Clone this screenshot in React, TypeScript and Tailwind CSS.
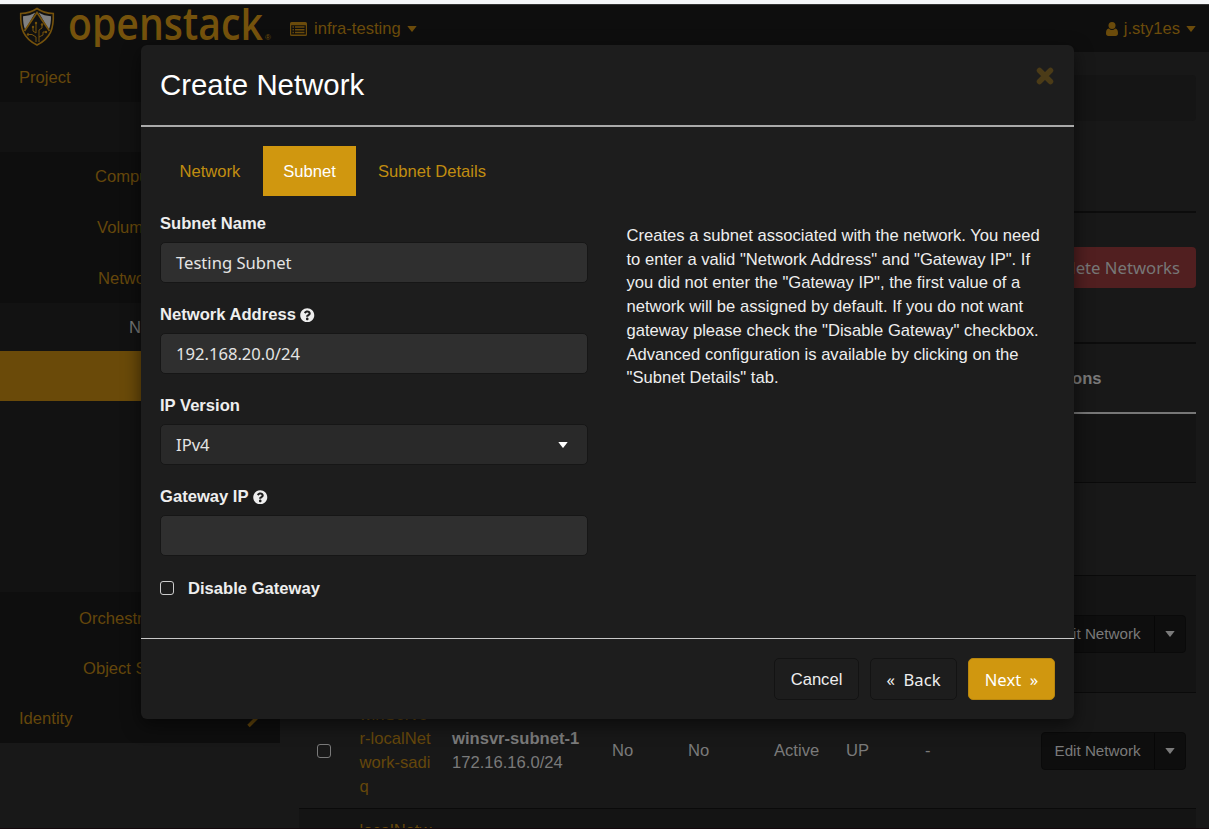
import { FaQuestionCircle } from "react-icons/fa";
import type { ReactNode } from "react";

function Caret({ className = "" }: { className?: string }) {
  return (
    <svg viewBox="0 0 10 6" className={`h-[6px] w-[10px] shrink-0 ${className}`} fill="currentColor">
      <path d="M0.3 0h9.4L5.5 5.5q-.5.5-1 0z" />
    </svg>
  );
}

function Shield() {
  return (
    <svg viewBox="0 0 36 40" className="h-[40px] w-[36px] shrink-0" fill="none">
      <path d="M18 1.500C13 5 8 6.300 1.700 6.500 1.200 21 4 31 18 38 32 31 34.800 21 34.300 6.500 28 6.300 23 5 18 1.500z" fill="#111" stroke="#75520c" strokeWidth="1.600" />
      <path d="M16.300 5.500C12.500 7.800 8.500 9 4 9.200c0 5 .5 9.500 2.200 13.600z" fill="#808080" />
      <path d="M19.700 5.500c3.800 2.300 7.800 3.500 12.300 3.700 0 5-.5 9.500-2.200 13.600z" fill="#808080" />
      <path d="M18 5.500L6 24c2.500 5.500 6.500 9.500 12 12 5.500-2.500 9.500-6.500 12-12z" fill="#111" />
      <path d="M5.500 24L18 5.500 30.500 24" stroke="#75520c" strokeWidth="1.800" />
      <path d="M17 17v9l-3-2v-4M20 35V23l3-2v-4M17 35v-5l-4-2.500H9M20 30l4-2v-3h3" stroke="#75520c" strokeWidth="1" />
      <g fill="#75520c">
        <circle cx="17" cy="16" r="1.200" />
        <circle cx="14" cy="20" r="1.200" />
        <circle cx="23" cy="17.500" r="1.200" />
        <circle cx="9" cy="27.500" r="1.200" />
        <circle cx="27" cy="25" r="1.200" />
      </g>
    </svg>
  );
}

function Header() {
  return (
    <header className="flex h-[48px] shrink-0 items-start border-t border-[#333] bg-[#0e0e0e] pl-[19px] pr-[13px] text-[#6b4b0b]">
      <div className="pt-[2px]">
        <Shield />
      </div>
      <svg viewBox="0 0 206 39" className="ml-[13px] mt-[3px] h-[39px] w-[206px] shrink-0 overflow-hidden" fill="#75520c">
        <text x="0" y="32" fontFamily="'Open Sans', sans-serif" fontWeight="600" fontSize="46" textLength="195" lengthAdjust="spacingAndGlyphs">openstack</text>
        <text x="197" y="32" fontFamily="'Liberation Sans', sans-serif" fontSize="8">®</text>
      </svg>
      <div className="ml-[16px] flex h-[47px] items-center">
        <svg viewBox="0 0 17 14" className="h-[14px] w-[17px]" fill="currentColor">
          <path fillRule="evenodd" d="M1.500 0h14A1.500 1.500 0 0 1 17 1.500v11a1.500 1.500 0 0 1-1.500 1.500h-14A1.500 1.500 0 0 1 0 12.500v-11A1.500 1.500 0 0 1 1.500 0zM1.200 3.200v9.300h14.600V3.200z" />
          <path d="M2.500 4.300h1.400v1.500H2.500zM2.500 7h1.400v1.500H2.500zM2.500 9.700h1.400v1.500H2.500zM5 4.300h9.500v1.500H5zM5 7h9.500v1.500H5zM5 9.700h9.500v1.500H5z" />
        </svg>
        <span className="ml-[7px] pt-px">infra-testing</span>
        <Caret className="ml-[6px]" />
      </div>
      <div className="ml-auto flex h-[47px] items-center">
        <svg viewBox="0 0 12 14" className="h-[14px] w-[12px]" fill="currentColor">
          <circle cx="6" cy="3.600" r="3.500" />
          <path d="M2.700 6.500Q6 9.500 9.300 6.500C11.300 6.700 12 8.800 12 11.300c0 1.700-.9 2.700-2.400 2.700H2.400C.9 14 0 13 0 11.300 0 8.800.7 6.700 2.700 6.500z" />
        </svg>
        <span className="ml-[6px] pt-px">j.sty1es</span>
        <Caret className="ml-[6px]" />
      </div>
    </header>
  );
}

function Sidebar() {
  return (
    <nav className="flex w-[280px] shrink-0 flex-col self-start bg-[#121212] text-[#65470b]">
      <div className="flex h-[50px] items-center bg-[#0e0e0e] pl-[19px] pt-[3px]">Project</div>
      <div className="h-[50px]" />
      <div className="flex h-[151px] flex-col bg-[#0e0e0e]">
        <div className="flex flex-1 items-center pl-[95px] pt-[2px]">Compute</div>
        <div className="flex flex-1 items-center pl-[97px] pt-[3px]">Volumes</div>
        <div className="flex flex-1 items-center pl-[98px] pt-[3px]">Network</div>
      </div>
      <div className="flex h-[48px] items-center pl-[129px] pt-[3px] text-[#777]">Network</div>
      <div className="h-[50px] bg-[#6a4a09]" />
      <div className="h-[191px]" />
      <div className="flex h-[151px] flex-col bg-[#0e0e0e]">
        <div className="flex flex-1 items-center pl-[79px] pt-[4px]">Orchestration</div>
        <div className="flex flex-1 items-center pl-[83px] pt-[4px]">Object Store</div>
        <div className="flex flex-1 items-center justify-between pl-[19px] pr-[22px] pt-[4px]">
          Identity
          <svg viewBox="0 0 11 16" className="h-[16px] w-[11px]" fill="none" stroke="currentColor" strokeWidth="3.500">
            <path d="M2 0l7 6.500L1.500 14" />
          </svg>
        </div>
      </div>
    </nav>
  );
}

function Checkbox({ className }: { className: string }) {
  return <span className={`h-[14px] w-[14px] shrink-0 rounded-[3px] border-[1.500px] ${className}`} />;
}

function EditNetwork() {
  return (
    <div className="ml-auto flex h-[38px] w-[145px] shrink-0 rounded-[4px] border border-[#0a0a0a] bg-[#0e0e0e] text-[15.200px] text-[#7a7a7a]">
      <span className="flex flex-1 items-center whitespace-nowrap pl-[12.500px] pt-px">Edit Network</span>
      <span className="flex w-[31px] items-center justify-center border-l border-[#070707]">
        <Caret className="h-[5px] w-[9px]" />
      </span>
    </div>
  );
}

function Main() {
  return (
    <main className="flex flex-1 flex-col pl-[19px] pr-[13px] text-[#7a7a7a]">
      <div className="mt-[23px] h-[46px] shrink-0 rounded-[4px] bg-[#151515]" />
      <div className="h-[92px] shrink-0 border-b-2 border-[#0c0c0c]" />
      <div className="flex h-[131px] shrink-0 items-start justify-end border-b-2 border-[#0c0c0c] pt-[34px]">
        <div className="flex h-[41px] items-center rounded-[4px] bg-[#511f20] pl-[15px] pr-[16px] pt-px font-['Noto_Sans',sans-serif] text-[16.700px] text-[#777]">Delete Networks</div>
      </div>
      <div className="flex h-[70px] shrink-0 items-center justify-end border-b-2 border-[#777] pr-[94.500px] pt-[2px] font-bold">Actions</div>
      <div className="h-[69px] shrink-0 border-b border-[#0a0a0a] bg-[#141414]" />
      <div className="h-[93px] shrink-0 border-b border-[#0a0a0a]" />
      <div className="flex h-[117px] shrink-0 items-center border-b border-[#0a0a0a] bg-[#141414] pr-[10px]">
        <EditNetwork />
      </div>
      <div className="flex h-[116px] shrink-0 items-center border-b border-[#0a0a0a] pr-[10px]">
        <Checkbox className="ml-[18px] border-[#7a7a7a]" />
        <div className="ml-[28.500px] w-[92.500px] pt-px leading-[23.800px] text-[#65470b]">winServe<br />r-localNet<br />work-sadi<br />q</div>
        <div className="w-[160px] leading-[23.800px]"><b>winsvr-subnet-1</b><br />172.16.16.0/24</div>
        <div className="w-[76px] pt-[2px]">No</div>
        <div className="w-[86px] pt-[2px]">No</div>
        <div className="w-[72px] pt-[2px]">Active</div>
        <div className="w-[79px] pt-[2px]">UP</div>
        <div className="pt-[2px]">-</div>
        <EditNetwork />
      </div>
      <div className="flex-1 bg-[#141414] pl-[60.500px] pt-[10px] leading-[23.800px] text-[#65470b]">localNetw</div>
    </main>
  );
}

function Field({ label, help, children }: { label: string; help?: boolean; children: ReactNode }) {
  return (
    <div className="mb-[20px]">
      <div className="flex h-[24px] items-center font-bold">
        {label}
        {help && <FaQuestionCircle className="ml-[4.500px] h-[14.500px] w-[14.500px]" />}
      </div>
      <div className="mt-[6px] h-[41px]">{children}</div>
    </div>
  );
}

const input = "flex h-[41px] items-center rounded-[5px] border border-[#161616] px-[15px] pt-px font-['Noto_Sans',sans-serif] text-[#e4e4e4]";

function Modal() {
  return (
    <section className="absolute left-[141px] top-[45px] flex h-[674px] w-[933px] flex-col rounded-[6px] bg-[#1d1d1d] text-[#eee] shadow-[0_6px_18px_rgba(0,0,0,0.55)]">
      <div className="flex h-[82px] items-start justify-between border-b-2 border-[#aaa] pl-[19px] pr-[20px]">
        <h1 className="mt-[20px] text-[29.400px] leading-[40px] text-white">Create Network</h1>
        <svg viewBox="0 0 18 18" className="mt-[22px] h-[18px] w-[18px]" stroke="#4b3b17" strokeWidth="5.500" strokeLinecap="round">
          <path d="M3.500 3.500l11 11M14.500 3.500l-11 11" />
        </svg>
      </div>
      <div className="flex h-[512px] flex-col border-b-[1.500px] border-[#c8c8c8] px-[19px] pt-[19px]">
        <div className="flex h-[50px] text-[#c18d10]">
          <span className="flex w-[103px] items-center pl-[19.500px] pt-[2px]">Network</span>
          <span className="flex w-[93px] items-center justify-center bg-[#d0970f] pt-[2px] text-white">Subnet</span>
          <span className="flex items-center pl-[22px] pt-[2px]">Subnet Details</span>
        </div>
        <div className="flex">
          <div className="w-[428px] pt-[16px]">
            <Field label="Subnet Name"><div className={`${input} bg-[#2f2f2f]`}>Testing Subnet</div></Field>
            <Field label="Network Address" help><div className={`${input} bg-[#2f2f2f]`}>192.168.20.0/24</div></Field>
            <Field label="IP Version">
              <div className={`${input} justify-between bg-[#292929]`}>IPv4<Caret className="mr-[4px] text-white" /></div>
            </Field>
            <Field label="Gateway IP" help><div className={`${input} bg-[#2f2f2f]`} /></Field>
            <div className="flex h-[24px] items-center font-bold">
              <Checkbox className="mr-[14px] border-[#ccc]" />
              <span className="pt-[2px]">Disable Gateway</span>
            </div>
          </div>
          <p className="ml-[38.500px] whitespace-nowrap pt-[28px] leading-[23.700px]">
            Creates a subnet associated with the network. You need<br />
            to enter a valid "Network Address" and "Gateway IP". If<br />
            you did not enter the "Gateway IP", the first value of a<br />
            network will be assigned by default. If you do not want<br />
            gateway please check the "Disable Gateway" checkbox.<br />
            Advanced configuration is available by clicking on the<br />
            "Subnet Details" tab.
          </p>
        </div>
      </div>
      <div className="flex justify-end pr-[19px] pt-[19px]">
        <button className="h-[42px] w-[85px] rounded-[5px] border border-[#131313] pt-[2px]">Cancel</button>
        <button className="ml-[11px] h-[42px] w-[87px] rounded-[5px] border border-[#131313] pt-[2px] font-['Noto_Sans',sans-serif]">«&nbsp; Back</button>
        <button className="ml-[11px] h-[42px] w-[87px] rounded-[5px] border border-[#b8860e] bg-[#d0970f] pt-[2px] font-['Noto_Sans',sans-serif] text-white">Next&nbsp; »</button>
      </div>
    </section>
  );
}

export default function App() {
  return (
    <div className="relative flex h-[829px] w-[1209px] flex-col overflow-hidden border-b border-[#14090d] bg-[#181818] font-['Liberation_Sans',Arial,sans-serif] text-[16.600px]">
      <div className="h-[4px] shrink-0 bg-[#f5f6f8]" />
      <Header />
      <div className="flex min-h-0 flex-1">
        <Sidebar />
        <Main />
      </div>
      <Modal />
    </div>
  );
}
